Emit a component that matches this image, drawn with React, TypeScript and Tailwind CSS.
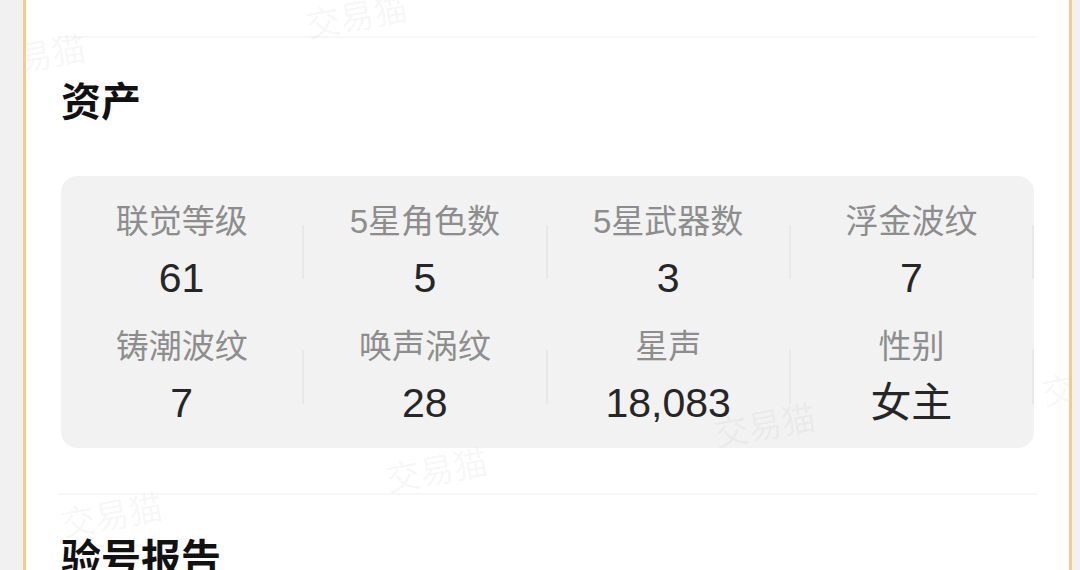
import React from "react";

const stats: { label: string; value: string }[][] = [
  [
    { label: "联觉等级", value: "61" },
    { label: "5星角色数", value: "5" },
    { label: "5星武器数", value: "3" },
    { label: "浮金波纹", value: "7" },
  ],
  [
    { label: "铸潮波纹", value: "7" },
    { label: "唤声涡纹", value: "28" },
    { label: "星声", value: "18,083" },
    { label: "性别", value: "女主" },
  ],
];

const marks: { x: number; y: number }[] = [
  { x: 331, y: 17 },
  { x: 9, y: 57 },
  { x: 739, y: 426 },
  { x: 411, y: 471 },
  { x: 86, y: 516 },
  { x: 1067, y: 385 },
];

export default function App() {
  return (
    <div className="w-[1080px] h-[570px] overflow-hidden bg-[#f1f1f1] flex font-['Liberation_Sans','Noto_Sans_CJK_SC',sans-serif]">
      <div className="relative ml-[23px] w-[1049px] h-[570px] overflow-hidden bg-white border-x-[3px] border-[#f7c98d]">
        <div className="h-[36px]" />
        <div className="mx-[32px] h-[2px] bg-[#f7f7f7]" />
        <div className="px-[35px]">
          <div className="mt-[44px] text-[40px] leading-[40px] font-bold text-[#111111]">资产</div>
          <div className="mt-[54px] h-[272px] rounded-[16px] bg-[#f2f2f2] pt-[13px] pb-[9px] flex flex-col">
            {stats.map((row, ri) => (
              <div key={ri} className="flex-1 flex items-center">
                {row.map((s) => (
                  <React.Fragment key={s.label}>
                    <div className="flex-1 flex flex-col items-center">
                      <div className="text-[33px] leading-[40px] text-[#8d8d8d]">{s.label}</div>
                      <div className="mt-[12px] text-[41px] leading-[48px] text-[#262626]">{s.value}</div>
                    </div>
                    <div className="w-[2px] h-[54px] bg-[#e8e8e8]" />
                  </React.Fragment>
                ))}
              </div>
            ))}
          </div>
        </div>
        <div className="mt-[45px] mx-[32px] h-[2px] bg-[#f7f7f7]" />
        <div className="px-[35px]">
          <div className="mt-[44px] text-[40px] leading-[40px] font-bold text-[#111111]">验号报告</div>
        </div>
        {marks.map((m, i) => (
          <span
            key={i}
            className="absolute -translate-x-1/2 -translate-y-1/2 -rotate-[10deg] whitespace-nowrap text-[34px] leading-[40px] text-black/[0.05] pointer-events-none select-none"
            style={{ left: m.x, top: m.y }}
          >
            交易猫
          </span>
        ))}
      </div>
    </div>
  );
}
